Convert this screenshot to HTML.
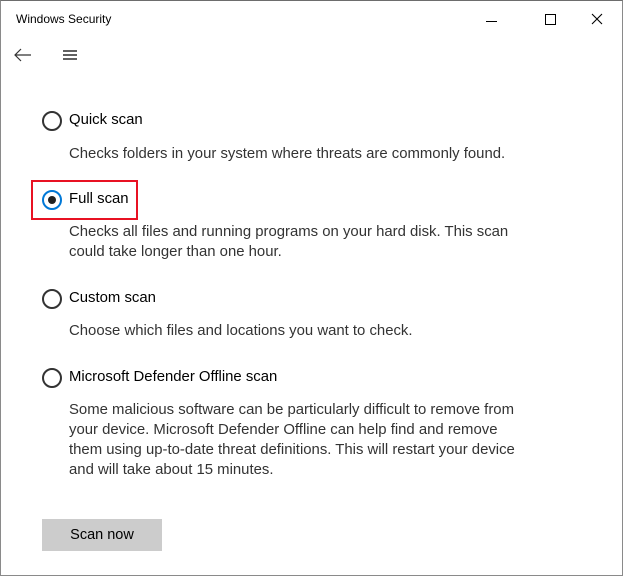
<html><head><style>
body{margin:0;width:623px;height:576px;overflow:hidden;background:#fff;font-family:"Liberation Sans",sans-serif;color:#000}
.win{position:absolute;left:0;top:0;width:621px;height:574px;border:1px solid #8a8a8a;border-top-color:#6d6d6d}
.t{position:absolute;white-space:nowrap}
.r{position:absolute;left:41px;width:16px;height:16px;border:2px solid #333;border-radius:50%}
.lab{font-size:14.9px;left:68px}
.d{font-size:14.9px;left:68px;color:#333;line-height:20px}
</style></head><body><div class="win">
<div class="t" style="left:15px;top:11px;font-size:12px">Windows Security</div>
<div style="position:absolute;left:485px;top:20px;width:11px;height:1px;background:#000"></div>
<div style="position:absolute;left:544px;top:13px;width:9px;height:9px;border:1px solid #000"></div>
<svg style="position:absolute;left:590px;top:12px" width="12" height="12"><path d="M1 1L11 11M11 1L1 11" stroke="#000" stroke-width="1.1"/></svg>
<svg style="position:absolute;left:12px;top:46px" width="20" height="16"><path d="M18 8H2M8 2L2 8l6 6" stroke="#333" stroke-width="1.2" fill="none"/></svg>
<svg style="position:absolute;left:61px;top:48px" width="16" height="12"><path d="M1 2h14M1 6h14M1 10h14" stroke="#000" stroke-width="1.3"/></svg>

<div class="r" style="top:110px"></div><div class="t lab" style="top:111px">Quick scan</div>
<div class="t d" style="top:143px">Checks folders in your system where threats are commonly found.</div>

<div style="position:absolute;left:30px;top:179px;width:103px;height:36px;border:2px solid #e81123"></div>
<div class="r" style="top:189px;border-color:#0078d7"><div style="position:absolute;left:4px;top:4px;width:8px;height:8px;border-radius:50%;background:#222"></div></div>
<div class="t lab" style="top:190px">Full scan</div>
<div class="t d" style="top:221px">Checks all files and running programs on your hard disk. This scan<br>could take longer than one hour.</div>

<div class="r" style="top:288px"></div><div class="t lab" style="top:289px">Custom scan</div>
<div class="t d" style="top:320px">Choose which files and locations you want to check.</div>

<div class="r" style="top:367px"></div><div class="t lab" style="top:368px">Microsoft Defender Offline scan</div>
<div class="t d" style="top:399px">Some malicious software can be particularly difficult to remove from<br>your device. Microsoft Defender Offline can help find and remove<br>them using up-to-date threat definitions. This will restart your device<br>and will take about 15 minutes.</div>

<div style="position:absolute;left:41px;top:518px;width:120px;height:32px;background:#cccccc;font-size:14.5px;text-align:center;line-height:32px">Scan now</div>
</div></body></html>
